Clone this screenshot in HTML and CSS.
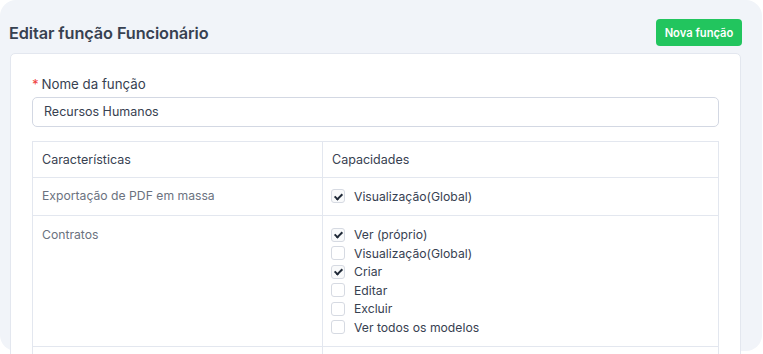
FILE: index.html
```html
<!DOCTYPE html>
<html lang="pt">
<head>
<meta charset="utf-8">
<link rel="stylesheet" href="styles.css">
</head>
<body>
<div class="page">
  <div class="header">
    <h1 class="title">Editar função Funcionário</h1>
    <button class="btn">Nova função</button>
  </div>
  <div class="card">
    <label class="label"><span class="req">*</span> Nome da função</label>
    <div class="input">Recursos Humanos</div>
    <table class="table">
      <thead>
        <tr><th class="c1">Características</th><th>Capacidades</th></tr>
      </thead>
      <tbody>
        <tr>
          <td class="c1 feat">Exportação de PDF em massa</td>
          <td><div class="caps">
            <div class="cap"><span class="cb on"></span>Visualização(Global)</div>
          </div></td>
        </tr>
        <tr>
          <td class="c1 feat feat2">Contratos</td>
          <td><div class="caps caps2">
            <div class="cap"><span class="cb on"></span>Ver (próprio)</div>
            <div class="cap"><span class="cb"></span>Visualização(Global)</div>
            <div class="cap"><span class="cb on"></span>Criar</div>
            <div class="cap"><span class="cb"></span>Editar</div>
            <div class="cap"><span class="cb"></span>Excluir</div>
            <div class="cap"><span class="cb"></span>Ver todos os modelos</div>
          </div></td>
        </tr>
        <tr><td class="c1">&nbsp;</td><td>&nbsp;</td></tr>
      </tbody>
    </table>
  </div>
</div>
</body>
</html>
```

FILE: styles.css
```css
html, body {
  margin: 0;
  padding: 0;
  background: #ffffff;
  overflow: hidden;
  height: 354px;
}
body {
  font-family: Inter, "Noto Sans", sans-serif;
  color: #374151;
}
.page {
  width: 762px;
  height: 351px;
  background: #f1f4f9;
  border-radius: 16px;
  box-sizing: border-box;
  padding: 19px 21px 0 10px;
}
.header {
  display: flex;
  justify-content: space-between;
  align-items: center;
  height: 27px;
  margin-bottom: 7px;
}
.title {
  margin: 0 0 0 -1px;
  font-size: 16.3px;
  font-weight: 600;
  color: #374151;
  letter-spacing: -0.1px;
}
.btn {
  height: 27px;
  width: 86px;
  border: none;
  border-radius: 4px;
  background: #22c55e;
  color: #ffffff;
  font-family: Inter, sans-serif;
  font-size: 11.2px;
  font-weight: 600;
  padding: 0;
  margin-right: -1px;
}
.card {
  background: #ffffff;
  border: 1px solid #e3e7ef;
  border-radius: 5px;
  padding: 22px 21px 40px 21px;
  height: 400px;
  box-sizing: border-box;
}
.label {
  display: block;
  font-size: 13.3px;
  line-height: 16px;
  color: #374151;
  margin-bottom: 5px;
}
.req {
  color: #ef4444;
  margin-right: -1px;
}
.input {
  height: 30px;
  box-sizing: border-box;
  border: 1px solid #d3d8e3;
  border-radius: 5px;
  padding: 0 11px;
  font-size: 12.5px;
  line-height: 28px;
  color: #374151;
  margin-bottom: 14px;
}
.table {
  width: 100%;
  border-collapse: collapse;
  font-size: 12.2px;
}
.table th, .table td {
  border: 1px solid #e3e7ef;
  text-align: left;
  vertical-align: top;
  padding: 0 9px;
}
.table th {
  font-weight: 400;
  color: #374151;
  height: 35px;
  line-height: 35px;
  font-size: 12.5px;
}
.c1 {
  width: 271px;
}
.feat {
  color: #6b7280;
  padding-top: 10px !important;
  line-height: 16px;
}
.feat2 {
  padding-top: 11px !important;
}
.table tbody tr:first-child td {
  height: 37px;
  box-sizing: border-box;
}
.caps {
  display: flex;
  flex-direction: column;
  padding: 9px 0 9px 0;
}
.caps2 {
  padding-top: 10px;
  padding-bottom: 9px;
}
.cap {
  display: flex;
  align-items: center;
  height: 18.5px;
  color: #374151;
}
.cb {
  width: 14px;
  height: 14px;
  box-sizing: border-box;
  border: 1px solid #d6dae2;
  border-radius: 3px;
  background: #ffffff;
  margin-right: 9px;
  margin-left: -1px;
  position: relative;
  flex: none;
}
.cb.on {
  background: #f9fafb;
}
.cb.on::after {
  content: "";
  position: absolute;
  left: 4px;
  top: 1.5px;
  width: 3px;
  height: 6px;
  border: solid #1f2937;
  border-width: 0 2.2px 2.2px 0;
  transform: rotate(45deg);
}
```
